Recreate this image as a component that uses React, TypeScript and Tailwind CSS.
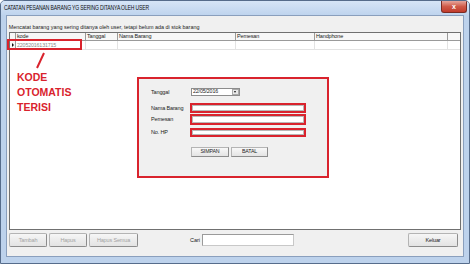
import React from 'react';

const font = { fontFamily: '"Liberation Sans", Arial, sans-serif' };

function WinButton({ label, width, disabled }: { label: string; width: string; disabled?: boolean }) {
  return (
    <div
      className={`${width} h-[14px] flex items-center justify-center bg-gradient-to-b from-[#f6f6f6] to-[#e3e3e3] border border-[#b4b4b4] border-r-[#8c8c8c] border-b-[#8c8c8c] rounded-[2px] text-[5.5px] tracking-[-0.15px] ${
        disabled ? 'text-[#a3a3a3]' : 'text-[#222]'
      }`}
    >
      {label}
    </div>
  );
}

function RedInput({ height }: { height: string }) {
  return (
    <div className={`w-[116px] ${height} border-2 border-[#d9232d] bg-white`}>
      <div className="w-full h-full border border-[#b8b8b8]" />
    </div>
  );
}

export default function App() {
  const columns = [
    { label: 'kode', w: 'w-[70px]' },
    { label: 'Tanggal', w: 'w-[32px]' },
    { label: 'Nama Barang', w: 'w-[118px]' },
    { label: 'Pemesan', w: 'w-[79px]' },
    { label: 'Handphone', w: 'w-[133px]' },
  ];

  return (
    <div style={font} className="w-[470px] h-[264px] flex flex-col bg-[#bdd2ec] border border-[#566c8b] rounded-t-[5px] overflow-hidden">
      {/* Title bar */}
      <div className="h-[14px] flex items-start justify-between bg-gradient-to-b from-[#d6e5f7] to-[#bfd4ee]">
        <span className="pl-[4px] pt-[3px] text-[7px] leading-[8px] tracking-[-0.2px] text-[#111] whitespace-nowrap scale-x-[0.72] origin-left">
          CATATAN PESANAN BARANG YG SERING DITANYA OLEH USER
        </span>
        <div className="w-[26px] h-[12px] mr-[2px] rounded-b-[3px] border border-t-0 border-[#7a2a22] bg-gradient-to-b from-[#e5a59c] via-[#cf5a48] to-[#c13a2b] flex items-center justify-center text-white text-[7px] font-bold leading-none">
          x
        </div>
      </div>

      {/* Client area */}
      <div className="flex-1 mx-[5px] mb-[6px] bg-[#f0f0f0] border border-[#8a9fbd] flex flex-col">
        <div className="pt-[7px] pl-[2px] h-[15px] text-[6px] leading-[8px] text-[#222] whitespace-nowrap scale-x-[0.9] origin-left">
          Mencatat barang yang sering ditanya oleh user, tetapi belum ada di stok barang
        </div>

        {/* Grid */}
        <div className="mt-[1px] mx-[2px] h-[198px] border border-[#707070] bg-white relative">
          <div className="flex h-[8px] bg-[#f7f7f7] border-b border-[#9a9a9a]">
            <div className="w-[6px] border-r border-[#9a9a9a]" />
            {columns.map((c) => (
              <div key={c.label} className={`${c.w} border-r border-[#9a9a9a] pl-[1px] text-[5.5px] leading-[7px] tracking-[-0.15px] text-[#222]`}>
                {c.label}
              </div>
            ))}
          </div>
          <div className="flex h-[9px] border-b border-[#e3e3e3]">
            <div className="w-[6px] border-r border-[#9a9a9a] bg-[#f7f7f7] flex items-center justify-center">
              <div className="w-0 h-0 border-y-[2px] border-y-transparent border-l-[2px] border-l-[#111]" />
            </div>
            {columns.map((c, i) => (
              <div key={c.label} className={`${c.w} border-r border-[#e3e3e3] pl-[1px] text-[5.3px] leading-[8px] tracking-[-0.15px] text-[#8a8a8a]`}>
                {i === 0 ? '22052016131715' : ''}
              </div>
            ))}
          </div>

          {/* Annotation: box round kode cell */}
          <div className="absolute left-[-3px] top-[6px] w-[75px] h-[11px] border-2 border-[#d9232d]" />
          <svg className="absolute left-[24px] top-[19px]" width="12" height="18" viewBox="0 0 12 18">
            <line x1="10" y1="1" x2="3" y2="16" stroke="#d9232d" strokeWidth="2" />
          </svg>
          <div className="absolute left-[7px] top-[37px] text-[10.5px] leading-[15px] font-bold text-[#d9232d]">
            <div>KODE</div>
            <div>OTOMATIS</div>
            <div>TERISI</div>
          </div>

          {/* Entry form panel */}
          <div className="absolute left-[127px] top-[44px] w-[192px] h-[101px] border-2 border-[#d9232d] bg-[#f0f0f0] pl-[12px] pt-[9px] text-[5.5px] tracking-[-0.15px] text-[#222]">
            <div className="flex items-center h-[8px]">
              <div className="w-[40px]">Tanggal</div>
              <div className="w-[49px] h-[8px] bg-white border border-[#8c8c8c] flex items-center justify-between pl-[1px] text-[5.3px]">
                <span>22/05/2016</span>
                <div className="w-[7px] h-[6px] mr-[0.5px] bg-[#e8e8e8] border border-[#a8a8a8] flex items-center justify-center">
                  <div className="w-0 h-0 border-x-[1.5px] border-x-transparent border-t-[2px] border-t-[#111]" />
                </div>
              </div>
            </div>
            <div className="flex items-center mt-[7px] h-[10px]">
              <div className="w-[39px]">Nama Barang</div>
              <RedInput height="h-[10px]" />
            </div>
            <div className="flex items-center mt-[1px] h-[11px]">
              <div className="w-[39px]">Pemesan</div>
              <RedInput height="h-[11px]" />
            </div>
            <div className="flex items-center mt-[3px] h-[9px]">
              <div className="w-[39px]">No. HP</div>
              <RedInput height="h-[9px]" />
            </div>
            <div className="flex gap-[2px] mt-[10px] ml-[40px]">
              <div className="w-[38px] h-[10px] flex items-center justify-center bg-gradient-to-b from-[#f8f8f8] to-[#e4e4e4] border border-[#b4b4b4] border-r-[#8c8c8c] border-b-[#8c8c8c] text-[5.3px]">
                SIMPAN
              </div>
              <div className="w-[37px] h-[10px] flex items-center justify-center bg-gradient-to-b from-[#f8f8f8] to-[#e4e4e4] border border-[#b4b4b4] border-r-[#8c8c8c] border-b-[#8c8c8c] text-[5.3px]">
                BATAL
              </div>
            </div>
          </div>
        </div>

        {/* Bottom bar */}
        <div className="mt-[3px] h-[14px] flex items-center pl-[2px] pr-[5px]">
          <div className="flex gap-[2px]">
            <WinButton label="Tambah" width="w-[38px]" disabled />
            <WinButton label="Hapus" width="w-[38px]" disabled />
            <WinButton label="Hapus Semua" width="w-[49px]" disabled />
          </div>
          <div className="ml-[52px] w-[12px] text-[5.5px] text-[#222]">Cari</div>
          <div className="w-[92px] h-[12px] bg-white border border-[#c8c8c8] border-t-[#9a9a9a] border-l-[#9a9a9a]" />
          <div className="flex-1" />
          <WinButton label="Keluar" width="w-[50px]" />
        </div>
      </div>
    </div>
  );
}
